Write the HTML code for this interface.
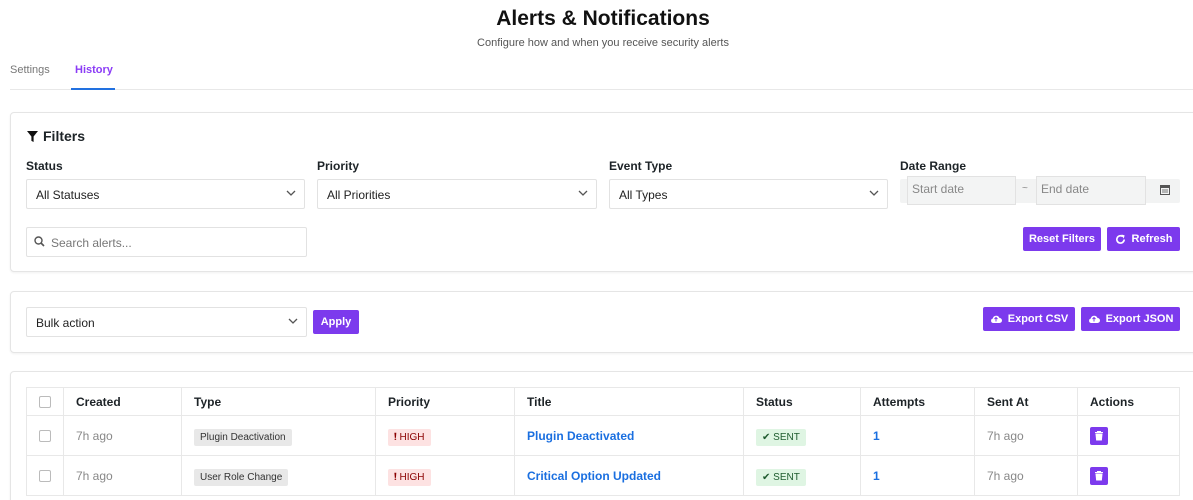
<!DOCTYPE html>
<html style="overflow:hidden;height:500px"><head><meta charset="utf-8"><style>
*{box-sizing:border-box;margin:0;padding:0}
body{width:1193px;height:500px;overflow:hidden;background:#fff;font-family:"Liberation Sans",sans-serif;color:#1d2327;position:relative}
.a{position:absolute}
.card{position:absolute;left:10px;width:1200px;border:1px solid #e5e5e5;border-radius:4px;background:#fff;box-shadow:0 1px 2px rgba(0,0,0,.06)}
.lbl{position:absolute;font-size:12px;font-weight:bold;color:#1d2327}
.sel{position:absolute;height:30px;border:1px solid #e2e2e2;border-radius:2px;font-size:12px;color:#222;padding:8px 9px;background:#fff}
.sel svg{position:absolute;right:8px;top:10px}
.btn{position:absolute;background:#7c3aed;color:#fff;font-size:11px;font-weight:bold;border-radius:2px;display:flex;align-items:center;justify-content:center;gap:6px}
table{position:absolute;left:26px;top:387px;width:1154px;border-collapse:collapse;font-size:12px}
td,th{border:1px solid #e8e8e8;text-align:left;padding:0 12px;font-weight:normal}
th{height:28px;font-weight:bold;color:#1d2327}
td{height:40px}
.cb{width:12px;height:12px;border:1px solid #bbb;border-radius:2px;display:inline-block;vertical-align:middle}
.grey{color:#888}
.tag{background:#e8e8e8;font-size:10px;padding:3px 6px;border-radius:2px;color:#333}
.high{background:#fde2e2;color:#8b0000;font-size:10px;padding:3px 6px;border-radius:2px}
.sent{background:#dff5e3;color:#1e5b2e;font-size:10px;padding:3px 6px;border-radius:2px}
.lnk{color:#1a6fe0;font-weight:bold}
.trash{display:inline-block;width:18px;height:18px;background:#7c3aed;border-radius:2px;vertical-align:middle;position:relative}
</style></head><body>
<div class="a" style="left:0;width:1206px;top:7px;text-align:center;font-size:21px;font-weight:bold;color:#111">Alerts &amp; Notifications</div>
<div class="a" style="left:0;width:1206px;top:37px;text-align:center;font-size:11px;color:#555">Configure how and when you receive security alerts</div>
<div class="a" style="left:10px;top:64px;font-size:11px;color:#777">Settings</div>
<div class="a" style="left:75px;top:64px;font-size:11px;color:#8b3cf6;font-weight:bold">History</div>
<div class="a" style="left:10px;top:89px;width:1183px;height:1px;background:#e8e8e8"></div>
<div class="a" style="left:71px;top:88px;width:44px;height:2px;background:#2271e0"></div>

<div class="card" style="top:112px;height:160px"></div>
<svg class="a" style="left:27px;top:131px" width="11" height="11" viewBox="0 0 10 10"><path d="M0 0H10L6 5V10L4 9V5Z" fill="#111"/></svg>
<div class="a" style="left:43px;top:128px;font-size:14px;font-weight:bold">Filters</div>
<div class="lbl" style="left:26px;top:159px">Status</div>
<div class="lbl" style="left:317px;top:159px">Priority</div>
<div class="lbl" style="left:609px;top:159px">Event Type</div>
<div class="lbl" style="left:900px;top:159px">Date Range</div>
<div class="sel" style="left:26px;top:179px;width:279px">All Statuses<svg width="10" height="6"><path d="M1 1L5 5L9 1" stroke="#555" fill="none" stroke-width="1.3"/></svg></div>
<div class="sel" style="left:317px;top:179px;width:280px">All Priorities<svg width="10" height="6"><path d="M1 1L5 5L9 1" stroke="#555" fill="none" stroke-width="1.3"/></svg></div>
<div class="sel" style="left:609px;top:179px;width:279px">All Types<svg width="10" height="6"><path d="M1 1L5 5L9 1" stroke="#555" fill="none" stroke-width="1.3"/></svg></div>
<div class="a" style="left:900px;top:179px;width:280px;height:24px;background:#f2f3f3;border-radius:2px"></div>
<div class="a" style="left:907px;top:176px;width:109px;height:29px;border:1px solid #e2e2e2;background:#f3f4f4;font-size:12px;color:#888;padding:5px 4px">Start date</div>
<div class="a" style="left:1022px;top:183px;font-size:10px;color:#888">~</div>
<div class="a" style="left:1036px;top:176px;width:110px;height:29px;border:1px solid #e2e2e2;background:#f3f4f4;font-size:12px;color:#888;padding:5px 4px">End date</div>
<svg class="a" style="left:1160px;top:185px" width="10" height="10"><rect x="0.5" y="0.5" width="9" height="9" fill="none" stroke="#555"/><rect x="0" y="0" width="10" height="3" fill="#555"/><path d="M2 5h6M2 7h6" stroke="#777"/></svg>
<div class="sel" style="left:26px;top:227px;width:281px;padding-left:24px;color:#777;font-size:12px">Search alerts...</div>
<svg class="a" style="left:34px;top:236px" width="11" height="11"><circle cx="4.5" cy="4.5" r="3.5" stroke="#555" stroke-width="1.4" fill="none"/><path d="M7 7L10 10" stroke="#555" stroke-width="1.6"/></svg>
<div class="btn" style="left:1023px;top:227px;width:78px;height:24px">Reset Filters</div>
<div class="btn" style="left:1107px;top:227px;width:73px;height:24px"><svg width="11" height="11" viewBox="0 0 12 12"><path d="M10 6A4 4 0 1 1 8.5 2.8" stroke="#fff" stroke-width="1.8" fill="none"/><path d="M7 0.5L10.5 1.5L9.5 5Z" fill="#fff"/></svg>Refresh</div>

<div class="card" style="top:291px;height:62px"></div>
<div class="sel" style="left:26px;top:307px;width:281px">Bulk action<svg width="10" height="6"><path d="M1 1L5 5L9 1" stroke="#555" fill="none" stroke-width="1.3"/></svg></div>
<div class="btn" style="left:313px;top:310px;width:46px;height:24px">Apply</div>
<div class="btn" style="left:983px;top:307px;width:92px;height:24px"><svg width="12" height="10" viewBox="0 0 12 10"><path d="M3 9H9.5A2.5 2.5 0 0 0 9.5 4A3.5 3.5 0 0 0 2.8 4.5A2.3 2.3 0 0 0 3 9Z" fill="#fff"/><path d="M6 3.5V7.5M4.5 5L6 3.5L7.5 5" stroke="#7c3aed" fill="none"/></svg>Export CSV</div>
<div class="btn" style="left:1081px;top:307px;width:99px;height:24px"><svg width="12" height="10" viewBox="0 0 12 10"><path d="M3 9H9.5A2.5 2.5 0 0 0 9.5 4A3.5 3.5 0 0 0 2.8 4.5A2.3 2.3 0 0 0 3 9Z" fill="#fff"/><path d="M6 3.5V7.5M4.5 5L6 3.5L7.5 5" stroke="#7c3aed" fill="none"/></svg>Export JSON</div>

<div class="card" style="top:371px;height:140px"></div>
<table>
<colgroup><col style="width:37px"><col style="width:118px"><col style="width:194px"><col style="width:139px"><col style="width:229px"><col style="width:117px"><col style="width:114px"><col style="width:103px"><col></colgroup>
<tr><th><span class="cb"></span></th><th>Created</th><th>Type</th><th>Priority</th><th>Title</th><th>Status</th><th>Attempts</th><th>Sent At</th><th>Actions</th></tr>
<tr><td><span class="cb"></span></td><td class="grey">7h ago</td><td><span class="tag">Plugin Deactivation</span></td><td><span class="high">&#x2757;&#xFE0E; HIGH</span></td><td class="lnk">Plugin Deactivated</td><td><span class="sent">&#x2714; SENT</span></td><td class="lnk">1</td><td class="grey">7h ago</td><td><span class="trash"><svg width="18" height="18" viewBox="0 0 18 18"><path d="M5 5.5H13M7.5 5.5V4.5H10.5V5.5M6 7H12L11.4 13H6.6Z" stroke="#fff" fill="#fff" stroke-width="1"/></svg></span></td></tr>
<tr><td><span class="cb"></span></td><td class="grey">7h ago</td><td><span class="tag">User Role Change</span></td><td><span class="high">&#x2757;&#xFE0E; HIGH</span></td><td class="lnk">Critical Option Updated</td><td><span class="sent">&#x2714; SENT</span></td><td class="lnk">1</td><td class="grey">7h ago</td><td><span class="trash"><svg width="18" height="18" viewBox="0 0 18 18"><path d="M5 5.5H13M7.5 5.5V4.5H10.5V5.5M6 7H12L11.4 13H6.6Z" stroke="#fff" fill="#fff" stroke-width="1"/></svg></span></td></tr>
</table>
<div class="a" style="left:26px;top:495px;width:1154px;height:1px;background:#e8e8e8"></div>
</body></html>
